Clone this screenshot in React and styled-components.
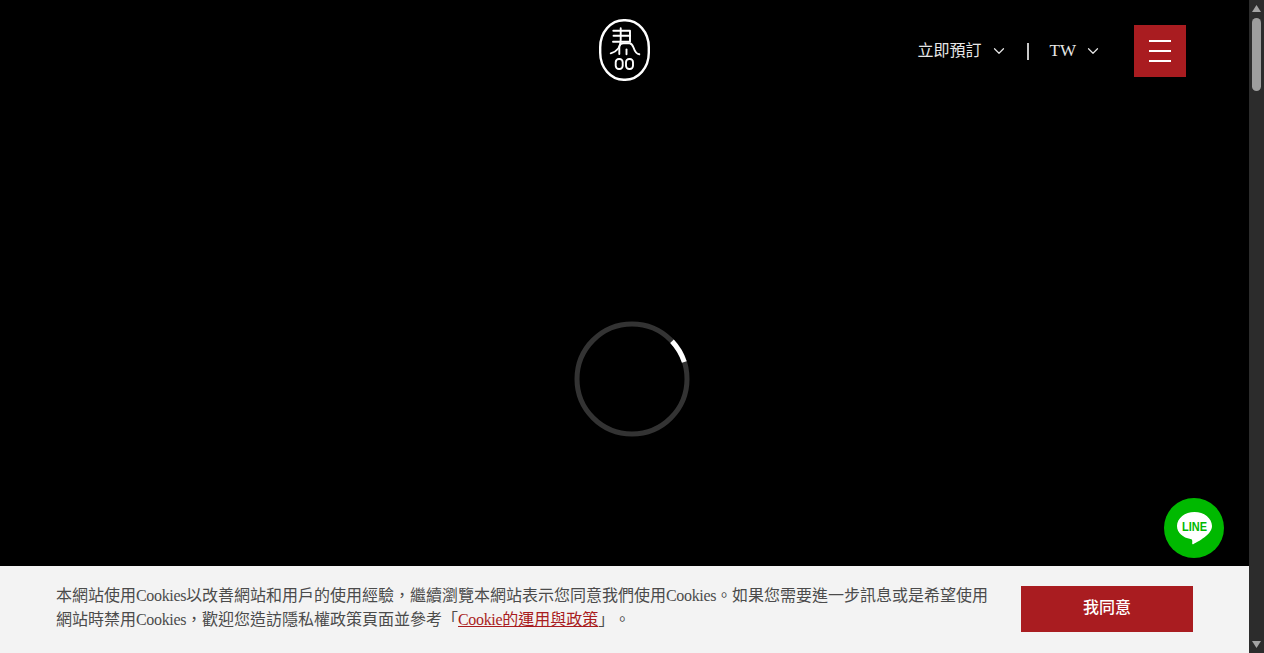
import React from "react";
import styled, { createGlobalStyle } from "styled-components";
import { ChevronDown } from "lucide-react";

const GlobalStyle = createGlobalStyle`
  html, body {
    margin: 0;
    padding: 0;
    height: 100%;
    overflow: hidden;
    background: #000;
    font-family: "Liberation Serif", "Noto Sans CJK TC", serif;
    text-spacing-trim: space-all;
  }
`;

const Shell = styled.div`
  display: flex;
  height: 653px;
  width: 1264px;
  position: relative;
`;

const Main = styled.div`
  flex: 1;
  min-width: 0;
  display: flex;
  flex-direction: column;
  background: #000;
`;

const Header = styled.header`
  display: grid;
  grid-template-columns: 1fr 51px 1fr;
  align-items: start;
  padding-top: 19px;
`;

const LogoLink = styled.a`
  grid-column: 2;
  display: block;
  width: 51px;
  height: 62px;
`;

const HeaderTools = styled.div`
  grid-column: 3;
  justify-self: end;
  display: flex;
  align-items: center;
  margin: 6px 63px 0 0;
  height: 52px;
`;

const ToolLink = styled.a`
  display: flex;
  align-items: center;
  gap: 8px;
  color: #e6e6e6;
  font-size: ${(props) => props.$size}px;
  line-height: 16px;
`;

const Divider = styled.span`
  width: 2px;
  height: 17px;
  margin: 0 21px 0 19px;
  background: #c8c8c8;
`;

const MenuButton = styled.button`
  width: 52px;
  height: 52px;
  margin-left: 32px;
  border: 0;
  padding: 0;
  background: #a91c20;
  display: flex;
  flex-direction: column;
  align-items: center;
  justify-content: center;
  gap: 8px;
`;

const MenuLine = styled.span`
  display: block;
  width: 22px;
  height: 2px;
  background: #fff;
`;

const Stage = styled.div`
  flex: 1;
  position: relative;
`;

const Spinner = styled.svg`
  position: absolute;
  left: 574px;
  top: 240px;
  width: 116px;
  height: 116px;
`;

const LineBadge = styled.a`
  position: absolute;
  right: 40px;
  top: 498px;
  width: 60px;
  height: 60px;
  display: block;
`;

const CookieBar = styled.div`
  height: 87px;
  box-sizing: border-box;
  background: #f3f3f3;
  display: flex;
  align-items: flex-start;
  justify-content: space-between;
  padding: 18px 56px 0;
`;

const CookieText = styled.p`
  margin: 0;
  width: 935px;
  font-size: 16px;
  line-height: 24px;
  color: #4b4b4b;
`;

const Latin = styled.span`
  letter-spacing: -0.35px;
`;

const CookieLink = styled.a`
  color: #a91c20;
  text-decoration: underline;
`;

const AgreeButton = styled.button`
  width: 172px;
  height: 46px;
  margin-top: 2px;
  border: 0;
  padding: 0 0 6px;
  background: #a91c20;
  color: #fff;
  font-family: inherit;
  font-size: 16px;
  font-weight: 500;
`;

const ScrollRail = styled.div`
  width: 15px;
  background: #2c2c2c;
  display: flex;
  flex-direction: column;
  align-items: center;
  justify-content: space-between;
  padding: 4px 0;
  box-sizing: border-box;
`;

const ScrollTop = styled.div`
  display: flex;
  flex-direction: column;
  align-items: center;
  gap: 5px;
`;

const ScrollThumb = styled.div`
  width: 9px;
  height: 73px;
  border-radius: 5px;
  background: #9e9e9e;
`;

const ScrollArrow = styled.svg`
  width: 9px;
  height: 9px;
  fill: #a3a3a3;
  display: block;
`;

const SealLogo = () => (
  <svg width="51" height="62" viewBox="0 0 51 62" fill="none" stroke="#fff" strokeLinecap="round" strokeLinejoin="round">
    <rect x="1.2" y="1.2" width="48.6" height="59.6" rx="23.5" ry="27" strokeWidth="2.4" />
    <g strokeWidth="1.9">
      <path d="M14.3 11.7H31V22.7H14" />
      <path d="M14.5 16.7H31" />
      <path d="M21.7 9.3V21C21.7 27.5 18 32.8 11.7 34.3" />
      <path d="M20.3 35V28.5C20.3 25.8 22 24.3 24.5 24.3H30.5C32.5 24.3 33.5 26 34.5 28.5C35.6 31.8 37.5 35 40.3 35.3" />
      <path d="M27.5 35.3V30.5" />
      <rect x="16.7" y="40" width="7" height="10" rx="3.2" />
      <rect x="27" y="40" width="7" height="10" rx="3.2" />
    </g>
  </svg>
);

const App = () => {
  return (
    <>
      <GlobalStyle />
      <Shell>
        <Main>
          <Header>
            <LogoLink>
              <SealLogo />
            </LogoLink>
            <HeaderTools>
              <ToolLink $size={16}>
                立即預訂
                <ChevronDown size={18} strokeWidth={1.6} />
              </ToolLink>
              <Divider />
              <ToolLink $size={17}>
                TW
                <ChevronDown size={18} strokeWidth={1.6} />
              </ToolLink>
              <MenuButton aria-label="menu">
                <MenuLine />
                <MenuLine />
                <MenuLine />
              </MenuButton>
            </HeaderTools>
          </Header>
          <Stage>
            <Spinner viewBox="0 0 116 116" fill="none">
              <circle cx="58" cy="58" r="55" stroke="#333" strokeWidth="5" />
              <path d="M98 20.2A55 55 0 0 1 110.3 41" stroke="#fff" strokeWidth="5" />
            </Spinner>
          </Stage>
          <CookieBar>
            <CookieText>
              本網站使用<Latin>Cookies</Latin>以改善網站和用戶的使用經驗，繼續瀏覽本網站表示您同意我們使用<Latin>Cookies</Latin>。如果您需要進一步訊息或是希望使用網站時禁用<Latin>Cookies</Latin>，歡迎您造訪隱私權政策頁面並參考「<CookieLink><Latin>Cookie</Latin>的運用與政策</CookieLink>」。
            </CookieText>
            <AgreeButton>我同意</AgreeButton>
          </CookieBar>
        </Main>
        <ScrollRail>
          <ScrollTop>
            <ScrollArrow viewBox="0 0 9 9">
              <path d="M4.5 1L9 8H0Z" />
            </ScrollArrow>
            <ScrollThumb />
          </ScrollTop>
          <ScrollArrow viewBox="0 0 9 9">
            <path d="M0 1H9L4.5 8Z" />
          </ScrollArrow>
        </ScrollRail>
        <LineBadge>
          <svg width="60" height="60" viewBox="0 0 60 60">
            <circle cx="30" cy="30" r="30" fill="#00b900" />
            <path d="M30.5 14C21 14 13 20.2 13 28C13 34.6 19 39.8 26.5 41C28 41.3 28.6 42 28.2 45.2C28.1 46.2 28.8 46.6 29.6 46.1C33.4 43.8 48 36.8 48 28C48 20.2 40 14 30.5 14Z" fill="#fff" />
            <text x="30.5" y="32.8" textAnchor="middle" fill="#00b900" fontFamily="'Liberation Sans', sans-serif" fontWeight="700" fontSize="12" textLength="25" lengthAdjust="spacingAndGlyphs">LINE</text>
          </svg>
        </LineBadge>
      </Shell>
    </>
  );
};

export default App;
